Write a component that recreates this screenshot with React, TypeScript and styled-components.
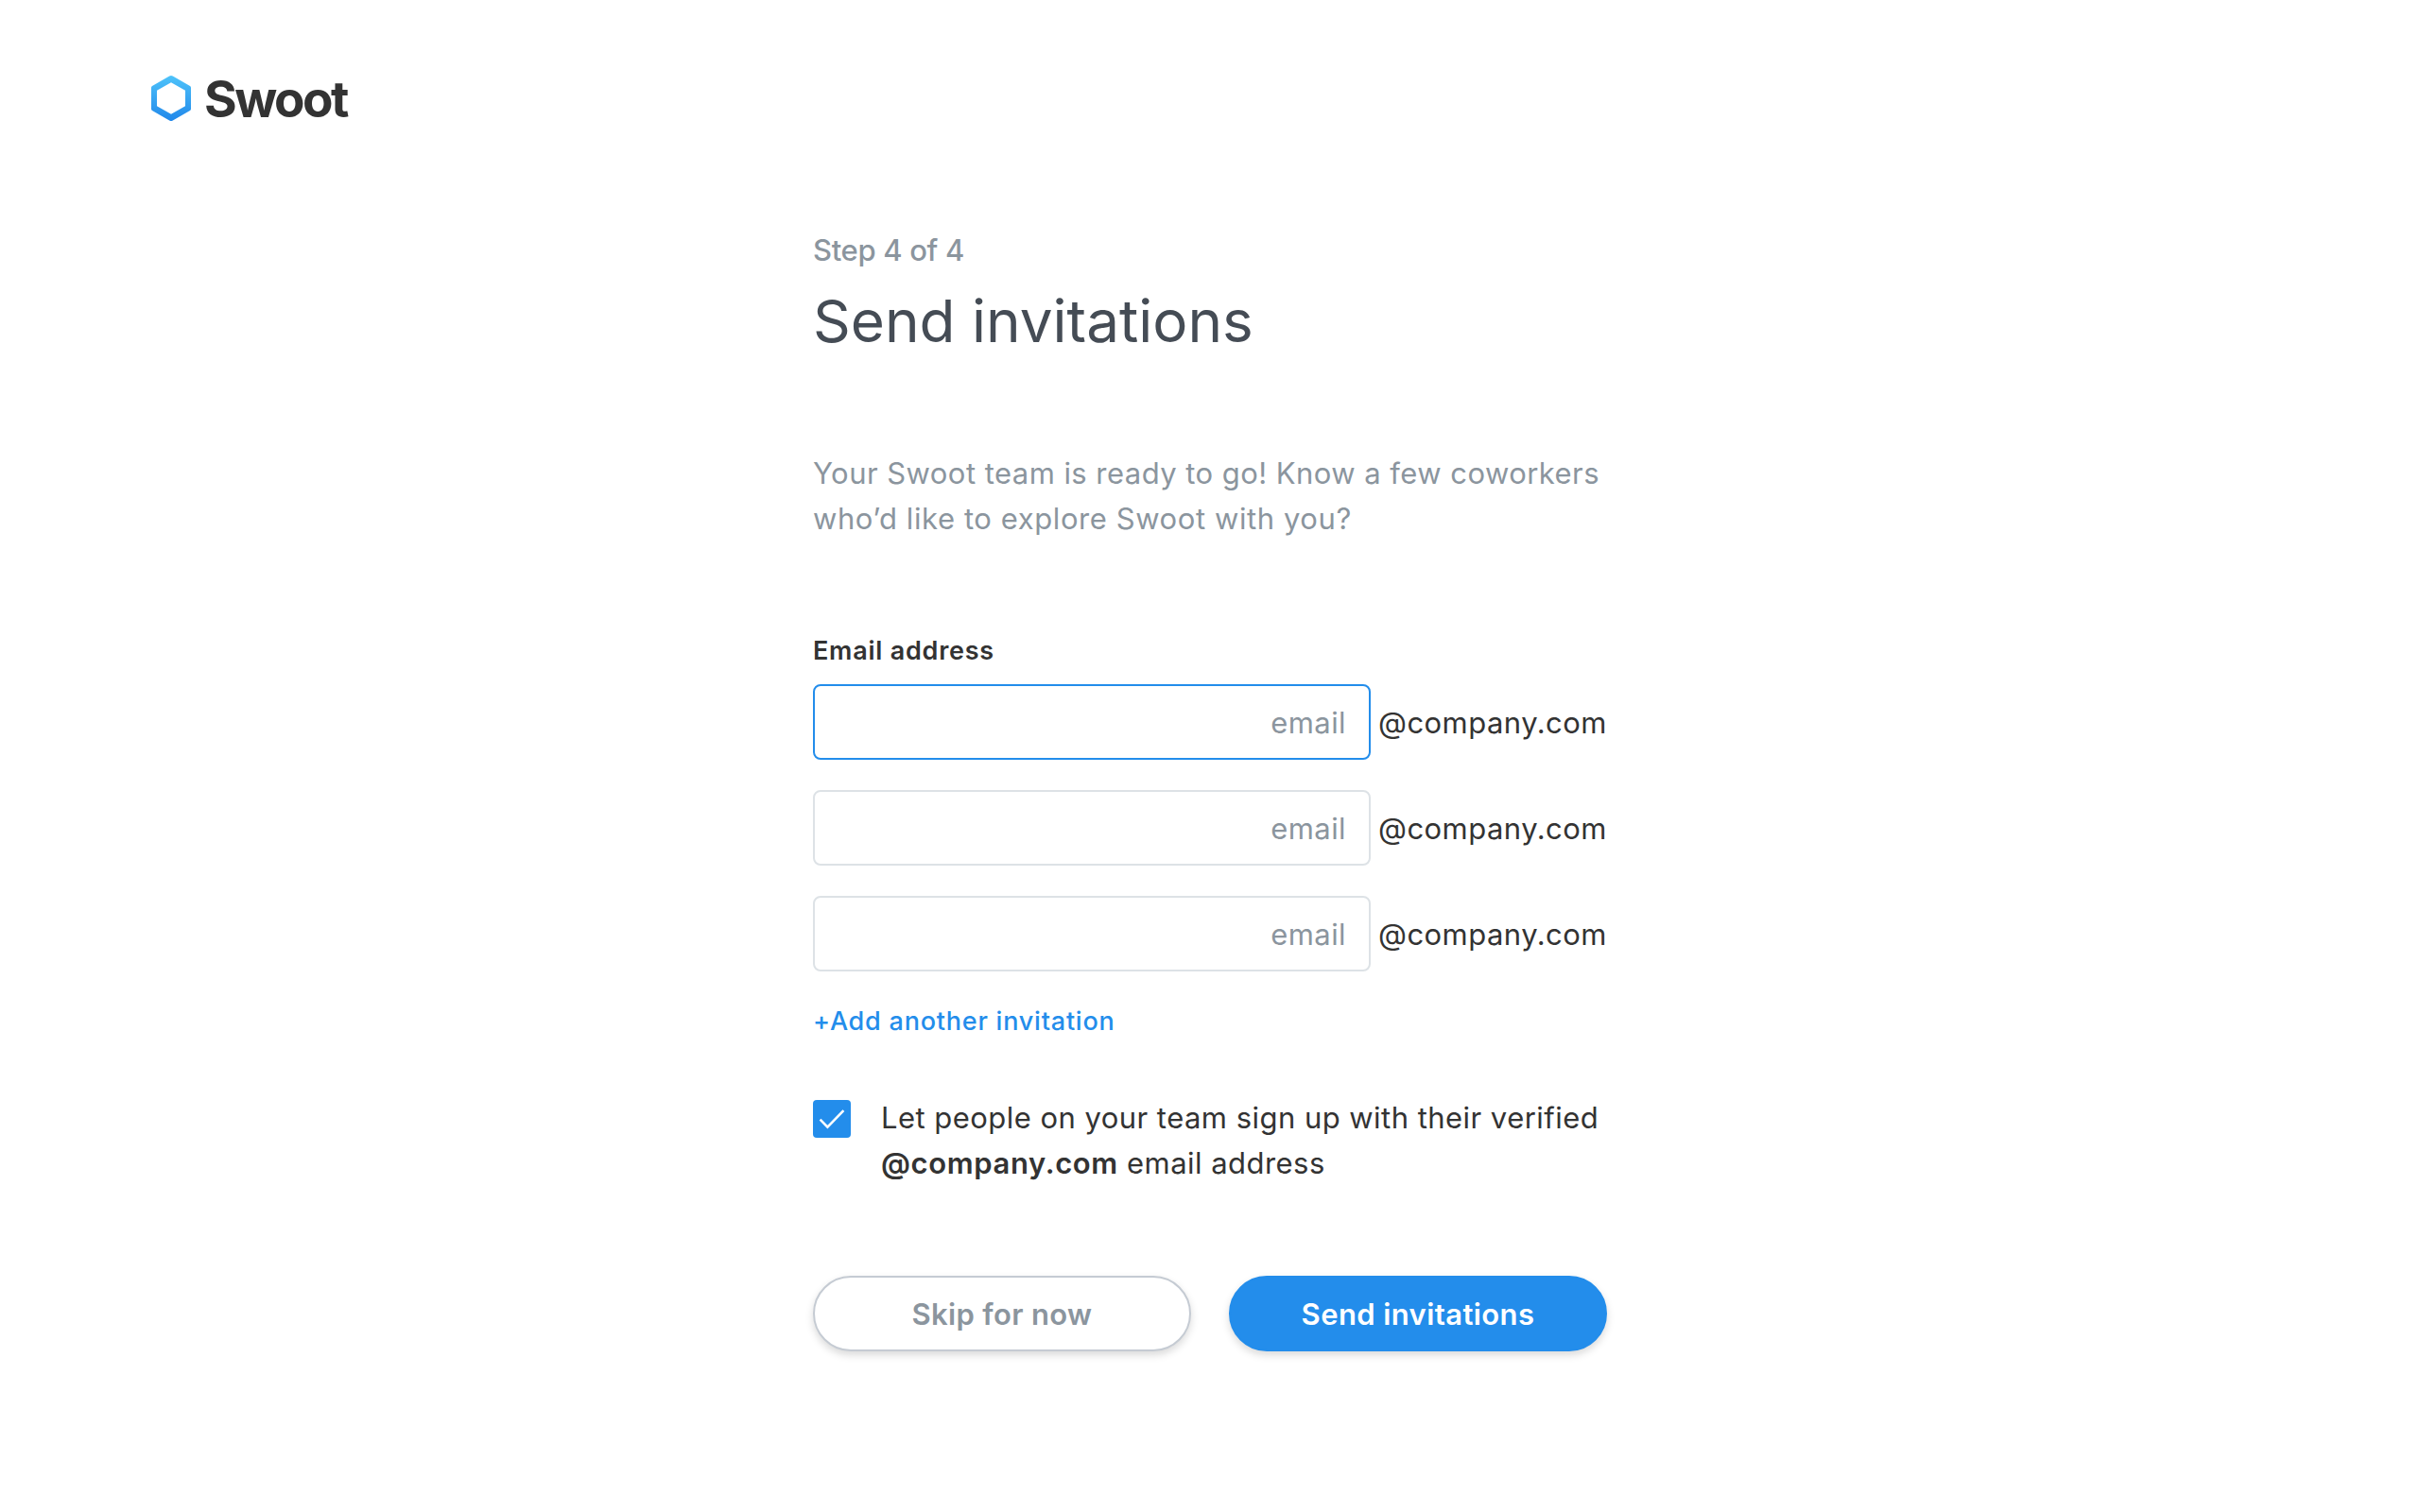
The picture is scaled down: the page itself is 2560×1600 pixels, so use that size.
import React from 'react';
import styled, { createGlobalStyle } from 'styled-components';

const Global = createGlobalStyle`
  *, *::before, *::after { box-sizing: border-box; }
  body { margin: 0; background: #fff; }
`;
const Page = styled.div`
  min-height: 1600px;
  padding: 72px 160px 0;
  font-family: Inter, "Liberation Sans", sans-serif;
  color: #333;
`;
const Logo = styled.div`
  display: flex;
  align-items: center;
  gap: 14px;
  height: 64px;
`;
const Word = styled.span`
  padding-top: 2px;
  font-size: 53px;
  line-height: 64px;
  font-weight: 700;
  letter-spacing: -2.5px;
`;
const Form = styled.form`
  width: 840px;
  margin: 109px auto 0;
`;
const Step = styled.p`
  margin: 0;
  font-size: 31px;
  line-height: 40px;
  font-weight: 500;
  letter-spacing: -0.33px;
  color: #8b959e;
`;
const Title = styled.h1`
  margin: 15px 0 0;
  font-size: 62px;
  line-height: 80px;
  font-weight: 400;
  color: #454c55;
`;
const Intro = styled.p`
  margin: 97px 0 0;
  font-size: 31px;
  line-height: 48px;
  color: #8b959e;
`;
const IntroLine = styled.span<{ $spacing: number }>`
  display: block;
  white-space: nowrap;
  letter-spacing: ${(p) => p.$spacing}px;
`;
const Label = styled.label`
  display: block;
  margin-top: 98px;
  font-size: 27px;
  line-height: 36px;
  font-weight: 600;
  letter-spacing: 0.76px;
`;
const Rows = styled.div`
  display: grid;
  gap: 32px;
  margin-top: 17px;
`;
const Row = styled.div`
  display: flex;
  align-items: center;
  gap: 8px;
`;
const Field = styled.input<{ $active?: boolean }>`
  width: 590px;
  height: 80px;
  padding: 0 24px;
  border: 2px solid ${(p) => (p.$active ? '#238deb' : '#dde2e6')};
  border-radius: 8px;
  background: #fff;
  outline: none;
  font: 400 31px Inter, "Liberation Sans", sans-serif;
  letter-spacing: 0.4px;
  text-align: right;
  &::placeholder { color: #8b959e; opacity: 1; }
`;
const Domain = styled.span`
  padding-top: 2px;
  font-size: 31px;
  line-height: 48px;
  letter-spacing: 0.46px;
`;
const AddLink = styled.a`
  display: block;
  margin-top: 35px;
  font-size: 27px;
  line-height: 36px;
  font-weight: 500;
  letter-spacing: 0.78px;
  color: #238deb;
`;
const Consent = styled.div`
  display: flex;
  gap: 32px;
  margin-top: 60px;
`;
const Check = styled.span`
  display: flex;
  width: 40px;
  height: 40px;
  margin-top: 5px;
  border-radius: 4px;
  background: #238deb;
`;
const ConsentText = styled.span`
  font-size: 31px;
  line-height: 48px;
  letter-spacing: 0.46px;
  white-space: nowrap;
  b { font-weight: 600; letter-spacing: 0.62px; }
`;
const Actions = styled.div`
  display: flex;
  gap: 40px;
  margin-top: 95px;
`;
const Button = styled.button<{ $primary?: boolean }>`
  width: 400px;
  height: 80px;
  padding: 0;
  border: 2px solid ${(p) => (p.$primary ? '#238deb' : '#c5cbd3')};
  border-radius: 40px;
  background: ${(p) => (p.$primary ? '#238deb' : '#fff')};
  color: ${(p) => (p.$primary ? '#fff' : '#8b959e')};
  box-shadow: 0 4px 8px rgba(0, 0, 0, 0.15);
  font: 600 31px Inter, "Liberation Sans", sans-serif;
  letter-spacing: ${(p) => (p.$primary ? '0.41px' : '0.35px')};
`;

const HexIcon = () => (
  <svg width="42" height="48" viewBox="0 0 42 48">
    <defs>
      <linearGradient id="hex" x1="0" y1="0" x2="0" y2="1">
        <stop offset="0" stopColor="#4ec3fa" />
        <stop offset="1" stopColor="#2188ea" />
      </linearGradient>
    </defs>
    <path
      fill="url(#hex)"
      fillRule="evenodd"
      d="M19.2.6Q21-.4 22.8.6L41 11Q42 11.6 42 12.8V35.2Q42 36.4 41 37L22.8 47.4Q21 48.4 19.2 47.4L1 37Q0 36.4 0 35.2V12.8Q0 11.6 1 11ZM21 7.2L6 15.8V32.2L21 40.8L36 32.2V15.8Z"
    />
  </svg>
);

const CheckIcon = () => (
  <svg width="40" height="40" viewBox="0 0 40 40" fill="none" stroke="#fff" strokeWidth="2.6">
    <path d="M7.6 20.6L15.4 28.6L32.4 11.2" />
  </svg>
);

const invitations = [{ active: true }, { active: false }, { active: false }];

export default function App() {
  return (
    <Page>
      <Global />
      <Logo>
        <HexIcon />
        <Word>Swoot</Word>
      </Logo>
      <Form>
        <Step>Step 4 of 4</Step>
        <Title>Send invitations</Title>
        <Intro>
          <IntroLine $spacing={0.45}>Your Swoot team is ready to go! Know a few coworkers</IntroLine>
          <IntroLine $spacing={0.58}>who’d like to explore Swoot with you?</IntroLine>
        </Intro>
        <Label>Email address</Label>
        <Rows>
          {invitations.map((item, i) => (
            <Row key={i}>
              <Field $active={item.active} placeholder="email" />
              <Domain>@company.com</Domain>
            </Row>
          ))}
        </Rows>
        <AddLink>+Add another invitation</AddLink>
        <Consent>
          <Check>
            <CheckIcon />
          </Check>
          <ConsentText>
            Let people on your team sign up with their verified
            <br />
            <b>@company.com</b> email address
          </ConsentText>
        </Consent>
        <Actions>
          <Button type="button">Skip for now</Button>
          <Button type="button" $primary>Send invitations</Button>
        </Actions>
      </Form>
    </Page>
  );
}
